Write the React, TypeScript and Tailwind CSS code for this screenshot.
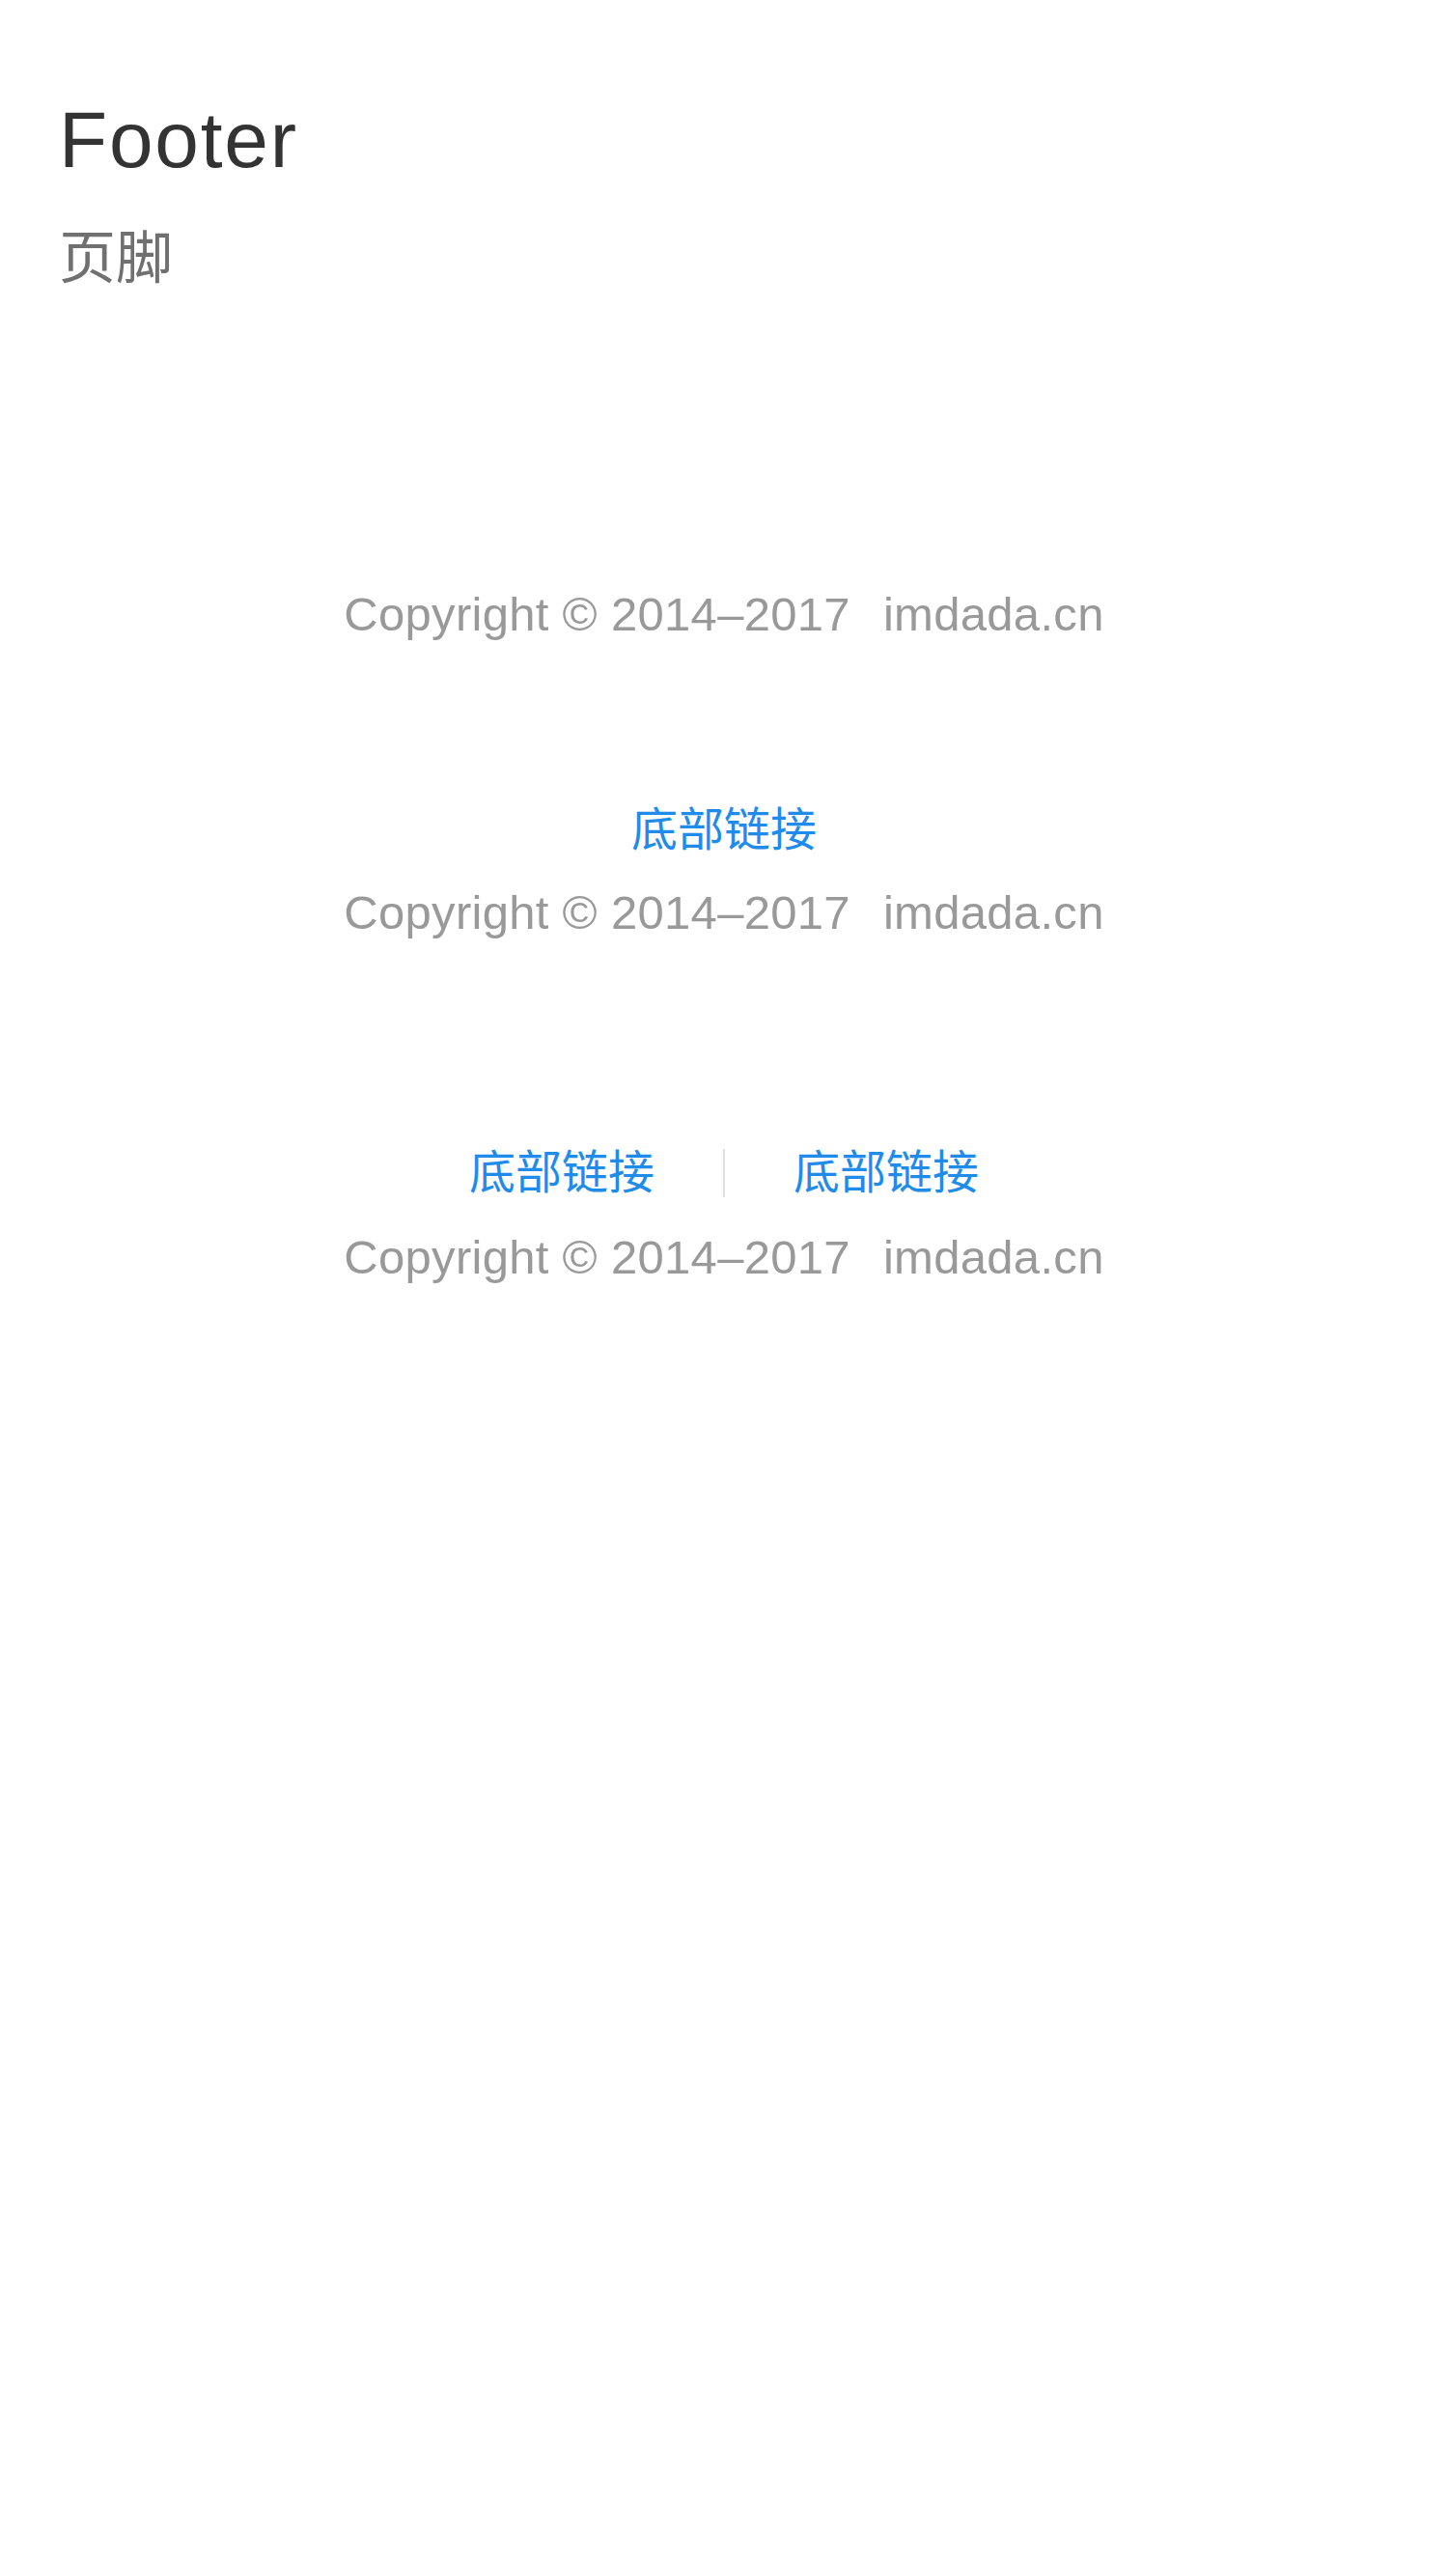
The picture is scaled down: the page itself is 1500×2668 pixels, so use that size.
import React from "react";

const font = { fontFamily: '"Liberation Sans", "Noto Sans CJK SC", sans-serif' };

function Copyright() {
  return (
    <div className="text-center text-[49px] leading-[48px] tracking-[0.3px] text-[#999999]">
      <span>Copyright © 2014–2017</span>
      <span className="ml-[34px]">imdada.cn</span>
    </div>
  );
}

export default function App() {
  return (
    <div className="min-h-[2668px] w-[1500px] bg-white" style={font}>
      <div className="pl-[61px] pt-[105px]">
        <h1 className="text-[82px] leading-[80px] tracking-[1.8px] text-[#333333] font-normal">Footer</h1>
        <p className="mt-[55px] text-[59px] leading-[56px] text-[#707070]">页脚</p>
      </div>

      <div className="mt-[316px]">
        <Copyright />
      </div>

      <div className="mt-[176px]">
        <div className="flex justify-center">
          <a className="text-[48px] leading-[48px] text-[#1f8ceb]">底部链接</a>
        </div>
        <div className="mt-[37px]">
          <Copyright />
        </div>
      </div>

      <div className="mt-[221px]">
        <div className="flex items-center justify-center gap-[71px]">
          <a className="text-[48px] leading-[48px] text-[#1f8ceb]">底部链接</a>
          <span className="block h-[50px] w-[2px] bg-[#e0e0e0]" />
          <a className="text-[48px] leading-[48px] text-[#1f8ceb]">底部链接</a>
        </div>
        <div className="mt-[38px]">
          <Copyright />
        </div>
      </div>
    </div>
  );
}
